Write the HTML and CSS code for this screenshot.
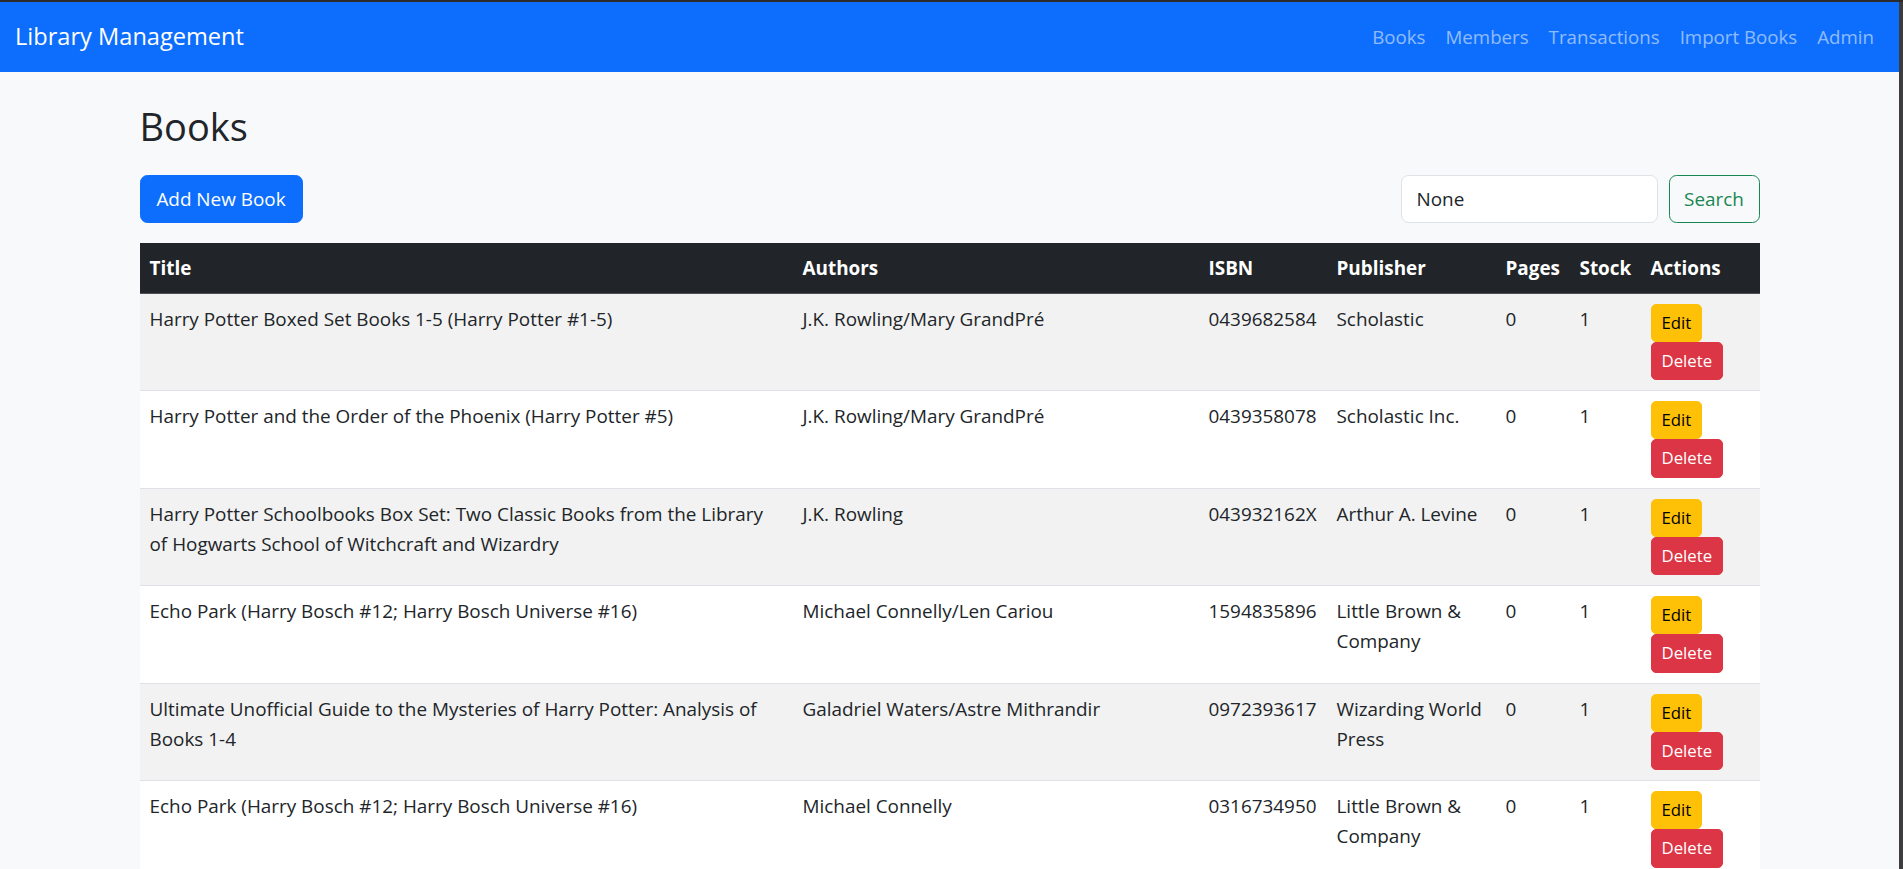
FILE: index.html
```html
<!DOCTYPE html>
<html lang="en">
<head>
<meta charset="utf-8">
<title>Library Management</title>
<link rel="stylesheet" href="styles.css">
</head>
<body>
<nav class="navbar">
  <a class="brand" href="#">Library Management</a>
  <ul class="nav">
    <li><a class="nav-link" href="#">Books</a></li>
    <li><a class="nav-link" href="#">Members</a></li>
    <li><a class="nav-link" href="#">Transactions</a></li>
    <li><a class="nav-link" href="#">Import Books</a></li>
    <li><a class="nav-link" href="#">Admin</a></li>
  </ul>
</nav>
<main class="container">
  <h2 class="page-title">Books</h2>
  <div class="toolbar">
    <a class="btn btn-primary" href="#">Add New Book</a>
    <form class="search">
      <input class="search-input" type="text" value="None">
      <button class="btn btn-outline-success" type="button">Search</button>
    </form>
  </div>
  <table class="table">
    <colgroup>
      <col class="c-title"><col class="c-authors"><col class="c-isbn"><col class="c-pub"><col class="c-pages"><col class="c-stock"><col class="c-actions">
    </colgroup>
    <thead>
      <tr><th>Title</th><th>Authors</th><th>ISBN</th><th>Publisher</th><th>Pages</th><th>Stock</th><th>Actions</th></tr>
    </thead>
    <tbody>
      <tr>
        <td>Harry Potter Boxed Set Books 1-5 (Harry Potter #1-5)</td>
        <td>J.K. Rowling/Mary GrandPré</td>
        <td>0439682584</td>
        <td>Scholastic</td>
        <td>0</td>
        <td>1</td>
        <td><div class="actions"><a class="btn-sm btn-warning" href="#">Edit</a><a class="btn-sm btn-danger" href="#">Delete</a></div></td>
      </tr>
      <tr>
        <td>Harry Potter and the Order of the Phoenix (Harry Potter #5)</td>
        <td>J.K. Rowling/Mary GrandPré</td>
        <td>0439358078</td>
        <td>Scholastic Inc.</td>
        <td>0</td>
        <td>1</td>
        <td><div class="actions"><a class="btn-sm btn-warning" href="#">Edit</a><a class="btn-sm btn-danger" href="#">Delete</a></div></td>
      </tr>
      <tr>
        <td>Harry Potter Schoolbooks Box Set: Two Classic Books from the Library of Hogwarts School of Witchcraft and Wizardry</td>
        <td>J.K. Rowling</td>
        <td>043932162X</td>
        <td>Arthur A. Levine</td>
        <td>0</td>
        <td>1</td>
        <td><div class="actions"><a class="btn-sm btn-warning" href="#">Edit</a><a class="btn-sm btn-danger" href="#">Delete</a></div></td>
      </tr>
      <tr>
        <td>Echo Park (Harry Bosch #12; Harry Bosch Universe #16)</td>
        <td>Michael Connelly/Len Cariou</td>
        <td>1594835896</td>
        <td>Little Brown &amp; Company</td>
        <td>0</td>
        <td>1</td>
        <td><div class="actions"><a class="btn-sm btn-warning" href="#">Edit</a><a class="btn-sm btn-danger" href="#">Delete</a></div></td>
      </tr>
      <tr>
        <td>Ultimate Unofficial Guide to the Mysteries of Harry Potter: Analysis of Books 1-4</td>
        <td>Galadriel Waters/Astre Mithrandir</td>
        <td>0972393617</td>
        <td>Wizarding World Press</td>
        <td>0</td>
        <td>1</td>
        <td><div class="actions"><a class="btn-sm btn-warning" href="#">Edit</a><a class="btn-sm btn-danger" href="#">Delete</a></div></td>
      </tr>
      <tr>
        <td>Echo Park (Harry Bosch #12; Harry Bosch Universe #16)</td>
        <td>Michael Connelly</td>
        <td>0316734950</td>
        <td>Little Brown &amp; Company</td>
        <td>0</td>
        <td>1</td>
        <td><div class="actions"><a class="btn-sm btn-warning" href="#">Edit</a><a class="btn-sm btn-danger" href="#">Delete</a></div></td>
      </tr>
    </tbody>
  </table>
</main>
</body>
</html>
```
FILE: styles.css
```css
html {
  height: 100%;
  overflow: hidden;
  background: #3c3c3c;
  border-top: 2px solid #2b2b2b;
}
* { box-sizing: border-box; }
body {
  margin: 0 4px 0 0;
  min-height: 100%;
  background: #f8f9fa;
  color: #212529;
  font-family: "Open Sans", "Noto Sans", sans-serif;
  font-size: 18.9px;
  line-height: 30px;
}
a { text-decoration: none; }

.navbar {
  height: 70px;
  background: #0d6efd;
  display: flex;
  align-items: center;
  justify-content: space-between;
  padding: 0 15px;
}
.brand {
  color: #fff;
  font-size: 23.6px;
  line-height: 37.5px;
}
.nav {
  list-style: none;
  margin: 0;
  padding: 0;
  display: flex;
}
.nav-link {
  display: block;
  padding: 0 10px;
  color: rgba(255, 255, 255, 0.55);
  font-size: 18.7px;
  line-height: 30px;
}

.container {
  width: 1620px;
  margin: 30px auto 0;
}
.page-title {
  margin: 0 0 25px;
  font-size: 38px;
  line-height: 48px;
  font-weight: 500;
}
.toolbar {
  display: flex;
  justify-content: space-between;
  align-items: center;
  margin-bottom: 20px;
}
.btn {
  display: inline-block;
  height: 47.5px;
  padding: 7.5px 15px;
  border: 1.25px solid transparent;
  border-radius: 7.5px;
  font-family: inherit;
  font-size: 18.9px;
  line-height: 30px;
  background: transparent;
}
.btn-primary {
  background: #0d6efd;
  border-color: #0d6efd;
  color: #fff;
  width: 163px;
  text-align: center;
}
.btn-outline-success {
  border-color: #198754;
  color: #198754;
  width: 91px;
  padding: 7.5px 0;
}
.search {
  display: flex;
  gap: 11px;
  margin: 0;
}
.search-input {
  width: 257px;
  height: 47.5px;
  padding: 7.5px 15px;
  border: 1.25px solid #dee2e6;
  border-radius: 7.5px;
  background: #fff;
  color: #212529;
  font-family: inherit;
  font-size: 18.9px;
  line-height: 30px;
}

.table {
  width: 1620px;
  border-collapse: collapse;
  table-layout: fixed;
}
.c-title { width: 653px; }
.c-authors { width: 406px; }
.c-isbn { width: 128px; }
.c-pub { width: 169px; }
.c-pages { width: 74px; }
.c-stock { width: 71px; }
.c-actions { width: 119px; }
.table th {
  background: #212529;
  color: #fff;
  font-weight: 700;
  text-align: left;
  padding: 10px;
  line-height: 30px;
  border-bottom: 1px solid #4d5154;
}
.table td {
  padding: 10px;
  vertical-align: top;
  background: #fff;
  border-bottom: 1px solid #dee2e6;
}
.table tbody tr:nth-child(odd) td {
  background: #f2f2f2;
}
.actions {
  display: flex;
  flex-direction: column;
  align-items: flex-start;
}
.btn-sm {
  display: block;
  padding: 5px 10px;
  border: 1.25px solid transparent;
  border-radius: 5px;
  font-size: 16.8px;
  line-height: 26.25px;
}
.btn-warning {
  background: #ffc107;
  border-color: #ffc107;
  color: #000;
}
.btn-danger {
  background: #dc3545;
  border-color: #dc3545;
  color: #fff;
}
```
